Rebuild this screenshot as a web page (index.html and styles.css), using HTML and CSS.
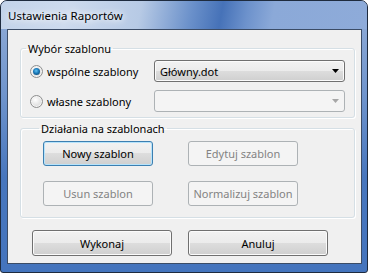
FILE: index.html
```html
<!DOCTYPE html>
<html lang="pl">

<head>
    <meta charset="utf-8" />
    <title>Ustawienia Raportów</title>
    <link rel="stylesheet" href="styles.css">
</head>

<body>
    <div class="window">
        <div class="titlebar">
            <span class="title">Ustawienia Raportów</span>
        </div>
        <div class="frame">
            <div class="client">

                <fieldset class="group group-templates">
                    <legend>Wybór szablonu</legend>
                    <div class="choice-row">
                        <label class="radio"><span class="radio-dot checked"></span>wspólne szablony</label>
                        <div class="combo">
                            <span class="combo-text">Główny.dot</span>
                            <svg class="combo-arrow" width="7" height="4" viewBox="0 0 7 4"><path d="M0 0h7L3.5 4z" fill="#000"/></svg>
                        </div>
                    </div>
                    <div class="choice-row">
                        <label class="radio"><span class="radio-dot"></span>własne szablony</label>
                        <div class="combo disabled">
                            <span class="combo-text"></span>
                            <svg class="combo-arrow" width="7" height="4" viewBox="0 0 7 4"><path d="M0 0h7L3.5 4z" fill="#a6a6a6"/></svg>
                        </div>
                    </div>
                </fieldset>

                <fieldset class="group group-actions">
                    <legend>Działania na szablonach</legend>
                    <div class="action-grid">
                        <button class="btn default">Nowy szablon</button>
                        <button class="btn" disabled>Edytuj szablon</button>
                        <button class="btn" disabled>Usun szablon</button>
                        <button class="btn" disabled>Normalizuj szablon</button>
                    </div>
                </fieldset>

                <div class="dialog-buttons">
                    <button class="btn wide">Wykonaj</button>
                    <button class="btn wide">Anuluj</button>
                </div>

            </div>
        </div>
    </div>
</body>

</html>
```

FILE: styles.css
```css
body {
    margin: 0;
    background-color: white;
    font-family: "Noto Sans", "Open Sans", sans-serif;
    font-size: 11px;
    color: #000;
}

.window {
    width: 368px;
    height: 273px;
    box-sizing: border-box;
    border: 1px solid #1e2b3e;
    border-radius: 7px 7px 3px 3px;
    overflow: hidden;
    display: flex;
    flex-direction: column;
    background: linear-gradient(to bottom, #93aed8 0%, #6f94cc 35%, #4776bd 65%, #4474bd 100%);
}

.titlebar {
    height: 28px;
    display: flex;
    align-items: center;
    padding-left: 7px;
    background: linear-gradient(100deg, #c3d3e9 0%, #cddbee 18%, #b7cae5 38%, #6a90ca 52%, #4672b8 60%, #6d92cc 67%, #8ba9d8 74%, #8eabd9 100%);
}

.title {
    font-size: 11.5px;
    line-height: 15px;
    padding-top: 1px;
    text-shadow: 0 0 6px #fff, 0 0 10px #fff;
}

.frame {
    flex: 1;
    display: flex;
    padding: 0 5px 8px 6px;
}

.client {
    flex: 1;
    border: 1px solid #3b4c66;
    background-color: #f0f0f0;
    padding: 11px 6px 0 12px;
}

.group {
    margin: 0;
    border: 1px solid #d5dfe5;
    border-radius: 3px;
    box-shadow: inset 1px 1px 0 #fff, 1px 1px 0 #fff;
    min-width: 0;
}

.group legend {
    padding: 0 2px;
    margin-left: -4px;
    line-height: 15px;
}

.group-templates {
    padding: 4px 9px 5px 9px;
    display: flex;
    flex-direction: column;
    gap: 8px;
}

.choice-row {
    display: flex;
    align-items: center;
    justify-content: space-between;
    height: 22px;
}

.radio {
    display: flex;
    align-items: center;
    gap: 4px;
    white-space: nowrap;
}

.radio-dot {
    width: 11px;
    height: 11px;
    border: 1px solid #8e8f8f;
    border-radius: 50%;
    background: radial-gradient(circle at 40% 35%, #ffffff 0%, #e8e8e8 45%, #cfcfcf 100%);
    box-shadow: inset 0 0 0 1px #f4f4f4;
    position: relative;
}

.radio-dot.checked::after {
    content: "";
    position: absolute;
    left: 2px;
    top: 2px;
    width: 7px;
    height: 7px;
    border-radius: 50%;
    background: radial-gradient(circle at 45% 40%, #5fc3f4 0%, #1a78b8 45%, #0d3a5c 100%);
}

.combo {
    width: 191px;
    height: 22px;
    box-sizing: border-box;
    border: 1px solid #707070;
    border-radius: 3px;
    background: linear-gradient(to bottom, #f2f2f2 0%, #ebebeb 50%, #dddddd 50%, #cfcfcf 100%);
    box-shadow: inset 0 0 0 1px #fbfbfb;
    display: flex;
    align-items: center;
    justify-content: space-between;
    padding: 0 5px 0 5px;
}

.combo.disabled {
    border-color: #adb2b5;
    background: #f4f4f4;
    box-shadow: none;
}

.group-actions {
    margin-top: 3px;
    padding: 5px 0 11px 22px;
}

.action-grid {
    display: grid;
    grid-template-columns: 110px 110px;
    column-gap: 35px;
    row-gap: 15px;
}

.btn {
    height: 25px;
    box-sizing: border-box;
    border: 1px solid #707070;
    border-radius: 3px;
    background: linear-gradient(to bottom, #f2f2f2 0%, #ebebeb 50%, #dddddd 50%, #cfcfcf 100%);
    box-shadow: inset 0 0 0 1px #fbfbfb;
    font-family: inherit;
    font-size: 11px;
    color: #000;
    padding: 0;
    white-space: nowrap;
}

.btn.default {
    border-color: #3c7fb1;
    box-shadow: inset 0 0 0 1px #b6e3fb;
}

.btn:disabled {
    border-color: #adb2b5;
    background: #f4f4f4;
    box-shadow: none;
    color: #838383;
}

.dialog-buttons {
    display: flex;
    gap: 16px;
    margin-top: 12px;
    padding-left: 12px;
}

.btn.wide {
    width: 140px;
    height: 26px;
}
```
